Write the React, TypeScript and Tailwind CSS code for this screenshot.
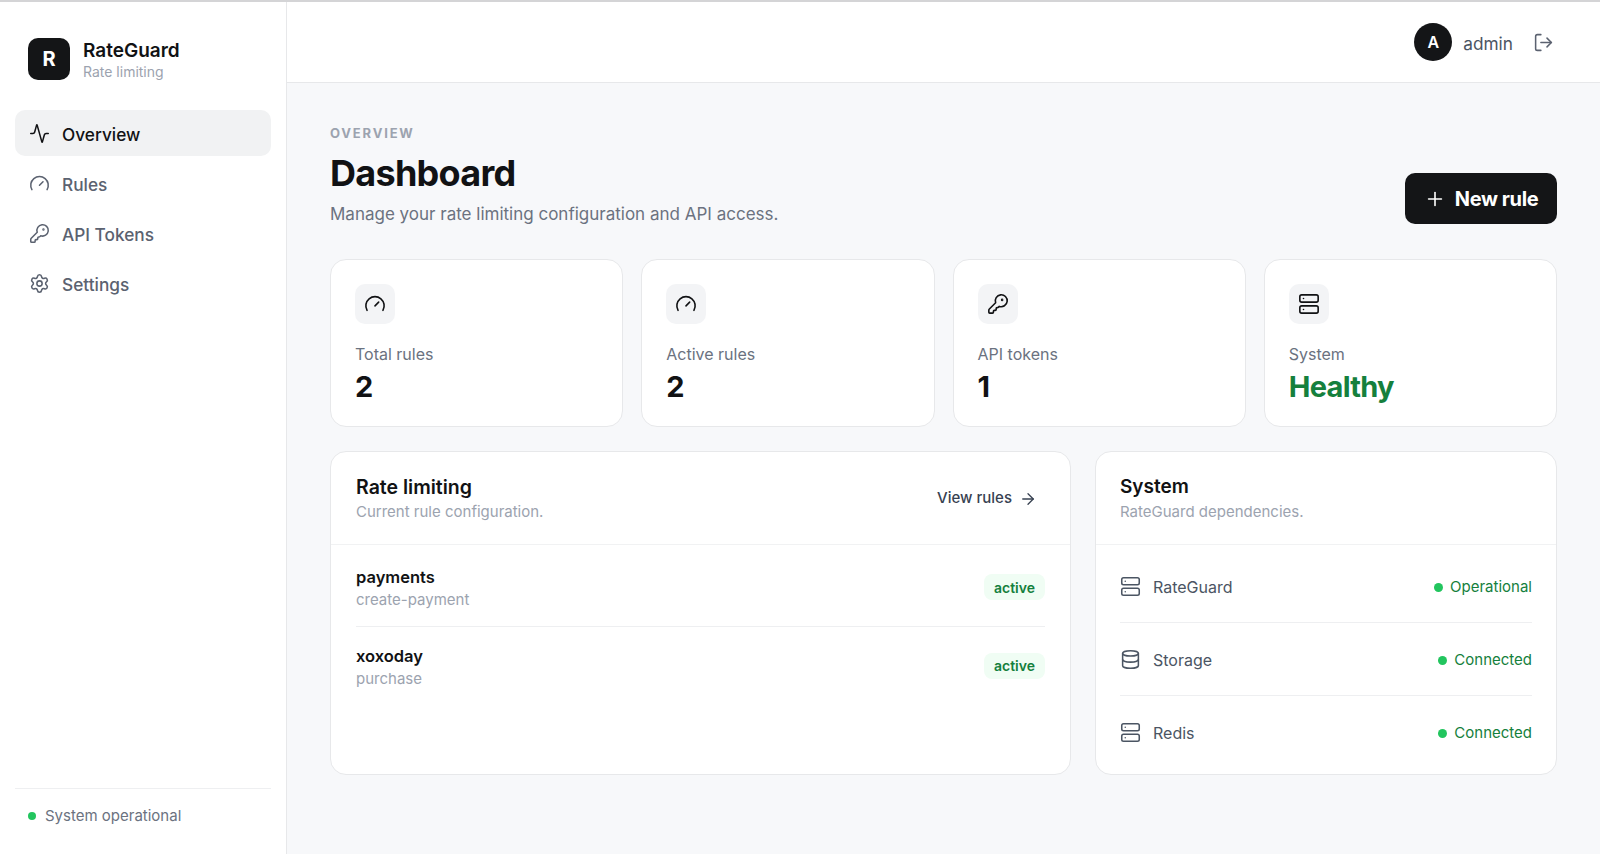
import { Activity, ArrowRight, Database, Gauge, KeyRound, LogOut, Plus, Server, Settings } from 'lucide-react';

const navItems = [
  { label: 'Overview', icon: Activity, active: true },
  { label: 'Rules', icon: Gauge, active: false },
  { label: 'API Tokens', icon: KeyRound, active: false },
  { label: 'Settings', icon: Settings, active: false },
];

const stats = [
  { label: 'Total rules', value: '2', icon: Gauge, healthy: false },
  { label: 'Active rules', value: '2', icon: Gauge, healthy: false },
  { label: 'API tokens', value: '1', icon: KeyRound, healthy: false },
  { label: 'System', value: 'Healthy', icon: Server, healthy: true },
];

const rules = [
  { name: 'payments', action: 'create-payment' },
  { name: 'xoxoday', action: 'purchase' },
];

const services = [
  { name: 'RateGuard', status: 'Operational', icon: Server },
  { name: 'Storage', status: 'Connected', icon: Database },
  { name: 'Redis', status: 'Connected', icon: Server },
];

export default function App() {
  return (
    <div className="flex h-screen flex-col overflow-hidden bg-white font-['Inter',sans-serif] text-[#111214]">
      <div className="h-[2px] shrink-0 bg-[#d4d4d6]" />
      <div className="flex min-h-0 flex-1">
        <aside className="flex w-[287px] shrink-0 flex-col border-r border-[#e7e8ea] bg-white px-[15px] pt-9">
          <div className="ml-[13px] flex items-center gap-[13px]">
            <div className="flex h-[42px] w-[42px] items-center justify-center rounded-[10px] bg-[#141517] text-[20px] font-bold text-white">
              R
            </div>
            <div className="h-[42px] pt-px">
              <div className="text-[19px] leading-6 font-semibold">RateGuard</div>
              <div className="text-[14px] leading-[18px] text-[#9ca3af]">Rate limiting</div>
            </div>
          </div>

          <nav className="mt-[30px] flex flex-col gap-1">
            {navItems.map((item) => (
              <div
                key={item.label}
                className={
                  item.active
                    ? 'flex h-[46px] items-center gap-3 rounded-[10px] bg-[#f1f2f3] pt-[3px] pl-[14px] text-[#111214]'
                    : 'flex h-[46px] items-center gap-3 rounded-[10px] pt-[3px] pl-[14px] text-[#5b6270]'
                }
              >
                <item.icon className="-mt-[2px]" size={21} strokeWidth={1.75} />
                <span className="text-[17.25px] font-medium">{item.label}</span>
              </div>
            ))}
          </nav>

          <div className="mt-auto flex h-[66px] items-start gap-[9px] border-t border-[#eeeff1] pt-4 pl-[13px]">
            <span className="mt-[7px] h-[8px] w-[8px] rounded-full bg-[#22c55e]" />
            <span className="text-[15px] leading-[22px] text-[#6b7280]">System operational</span>
          </div>
        </aside>

        <div className="flex min-w-0 flex-1 flex-col bg-[#f7f8fa]">
          <header className="flex h-[81px] shrink-0 items-center justify-end border-b border-[#e7e8ea] bg-white pr-[46px]">
            <div className="flex h-[38px] w-[38px] items-center justify-center rounded-full bg-[#141517] text-[16px] font-semibold text-white">
              A
            </div>
            <span className="ml-[11px] pt-1 text-[17.25px] text-[#4b5563]">admin</span>
            <LogOut className="ml-[20px] text-[#5b6270]" size={21} strokeWidth={1.75} />
          </header>

          <main className="px-[43px] pt-[41px]">
            <div className="flex items-end justify-between">
              <div>
                <div className="text-[13px] leading-[18px] font-bold tracking-[0.14em] text-[#9ca3af]">OVERVIEW</div>
                <h1 className="mt-[9px] text-[36px] leading-[44px] font-bold tracking-[-0.02em]">Dashboard</h1>
                <p className="mt-[7px] text-[17px] leading-6 text-[#6b7280]">Manage your rate limiting configuration and API access.</p>
              </div>
              <button className="mb-[2px] flex h-[51px] w-[152px] items-center justify-center gap-[9px] rounded-[10px] bg-[#141517] pt-px text-[20px] font-bold tracking-[-0.02em] text-white">
                <Plus size={22} strokeWidth={1.75} />
                New rule
              </button>
            </div>

            <div className="mt-[33px] grid grid-cols-4 gap-[18px]">
              {stats.map((stat) => (
                <div key={stat.label} className="h-[168px] rounded-2xl border border-[#e7e8ea] bg-white px-6 pt-6">
                  <div className="flex h-10 w-10 items-center justify-center rounded-[10px] bg-[#f3f4f6]">
                    <stat.icon size={22} strokeWidth={1.75} />
                  </div>
                  <div className="mt-[18px] text-[16px] leading-6 text-[#6b7280]">{stat.label}</div>
                  <div className={stat.healthy ? 'mt-[2.5px] text-[29px] leading-9 font-bold tracking-tight text-[#15803d]' : 'mt-[2.5px] text-[29px] leading-9 font-bold text-[#111214]'}>
                    {stat.value}
                  </div>
                </div>
              ))}
            </div>

            <div className="mt-6 grid grid-cols-[1fr_462px] gap-6">
              <section className="rounded-2xl border border-[#e7e8ea] bg-white">
                <div className="flex items-center justify-between border-b border-[#f1f2f3] px-[25px] pt-[22px] pb-[21px]">
                  <div>
                    <h2 className="text-[19.5px] leading-[26px] font-semibold">Rate limiting</h2>
                    <p className="mt-px text-[15px] leading-[22px] text-[#9ca3af]">Current rule configuration.</p>
                  </div>
                  <div className="mr-2 flex items-center gap-[7px] text-[15px] font-medium text-[#374151]">
                    View rules
                    <ArrowRight size={18} strokeWidth={1.75} />
                  </div>
                </div>
                <div className="px-[25px] pt-1">
                  {rules.map((rule, i) => (
                    <div
                      key={rule.name}
                      className={i === 0 ? 'flex items-center justify-between border-b border-[#eeeff1] pt-4 pb-[15px]' : 'flex items-center justify-between pt-[16.5px] pb-4'}
                    >
                      <div>
                        <div className="text-[16.5px] leading-6 font-semibold">{rule.name}</div>
                        <div className="text-[15px] leading-[22px] text-[#9ca3af]">{rule.action}</div>
                      </div>
                      <span className="-mt-[2px] flex h-[26px] w-[61px] items-center justify-center rounded-lg bg-[#f0fdf4] text-[14px] font-semibold text-[#15803d]">
                        active
                      </span>
                    </div>
                  ))}
                </div>
              </section>

              <section className="rounded-2xl border border-[#e7e8ea] bg-white">
                <div className="border-b border-[#f1f2f3] px-6 pt-[22px] pb-[21px]">
                  <h2 className="text-[19px] leading-[26px] font-semibold">System</h2>
                  <p className="mt-px text-[15px] leading-[22px] text-[#9ca3af]">RateGuard dependencies.</p>
                </div>
                <div className="px-6 pt-[5px] pb-[6px]">
                  {services.map((svc, i) => (
                    <div
                      key={svc.name}
                      className={i < 2 ? 'flex items-center justify-between border-b border-[#eeeff1] pt-[24.5px] pb-[23.5px]' : 'flex items-center justify-between pt-[24.5px] pb-[23.5px]'}
                    >
                      <div className="flex items-center gap-3 text-[#4b5563]">
                        <svc.icon size={21} strokeWidth={1.75} />
                        <span className="text-[16px] leading-6">{svc.name}</span>
                      </div>
                      <div className="flex translate-y-px items-center gap-[7px] text-[15px] text-[#15803d]">
                        <span className="h-[9px] w-[9px] rounded-full bg-[#22c55e]" />
                        {svc.status}
                      </div>
                    </div>
                  ))}
                </div>
              </section>
            </div>
          </main>
        </div>
      </div>
    </div>
  );
}
